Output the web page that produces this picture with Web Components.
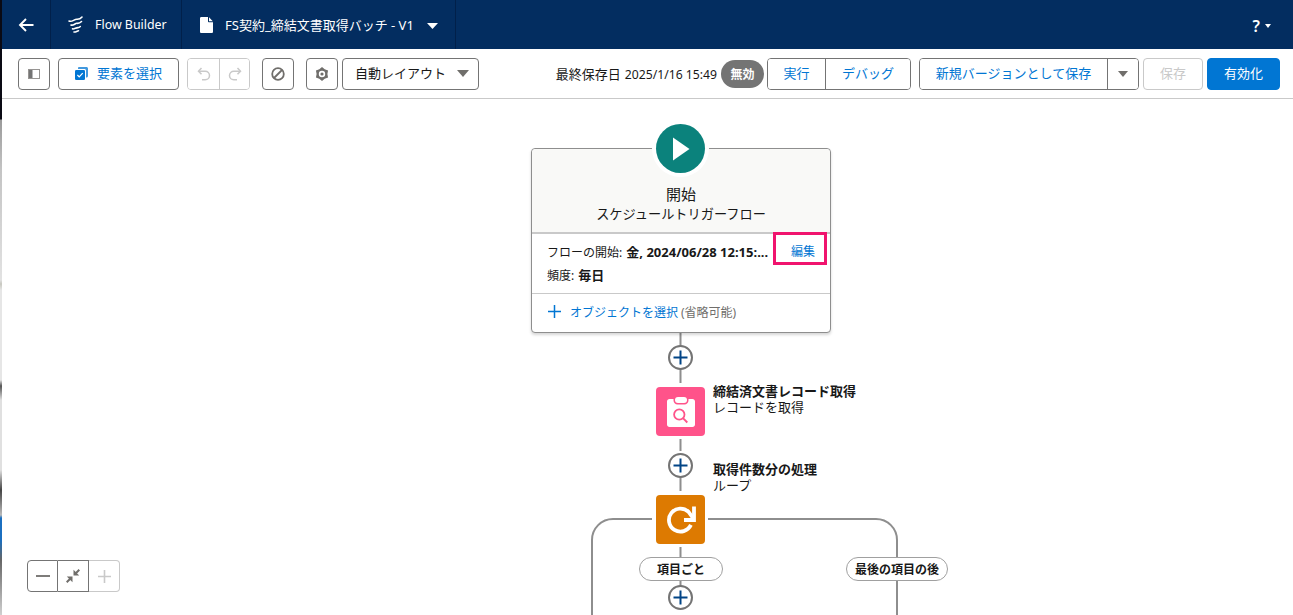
<!DOCTYPE html>
<html lang="ja"><head><meta charset="utf-8"><title>Flow Builder</title>
<style>
html,body{margin:0;height:615px;overflow:hidden;background:#fff;font-family:"Noto Sans","Noto Sans CJK JP",sans-serif;font-size:13px;color:#181818}
</style></head><body>
<fb-app>
  <fb-header slot="header"></fb-header>
  <fb-toolbar slot="toolbar"></fb-toolbar>
  <fb-canvas slot="canvas"></fb-canvas>
</fb-app>
<script>
const def=(name,html)=>{customElements.define(name,class extends HTMLElement{
  constructor(){super();this.attachShadow({mode:'open'}).innerHTML=html;}
});};

def('fb-app',`<style>
:host{display:flex;width:1293px;height:615px;overflow:hidden}
.strip{width:2px;flex:none;background:linear-gradient(#0a0a14 0,#0a0a14 119px,#9a9a9a 120px,#c4c4c4 170px,#e2e2e2 280px,#c8c8c0 284px,#e6e6e6 290px,#e6e6e6 380px,#555 386px,#e0e0e0 400px,#e0e0e0 470px,#444 490px,#bbb 515px,#1b6fc0 518px,#1b6fc0 540px,#666 560px,#d0d0d0 615px)}
.main{flex:1;display:flex;flex-direction:column;min-width:0}
</style><div class="strip"></div><div class="main"><slot name="header"></slot><slot name="toolbar"></slot><slot name="canvas"></slot></div>`);

def('fb-hsec',`<style>
:host{display:flex;align-items:center;height:49px;border-right:1px solid #01204a;box-sizing:border-box;color:#fff;font-size:13px;white-space:nowrap}
</style><slot></slot>`);

def('fb-header',`<style>
:host{display:flex;align-items:center;height:49px;background:#032d60;flex:none}
svg{display:block;flex:none}
.help{margin-left:auto;display:flex;align-items:center;gap:5px;margin-right:22px;color:#fff;font-size:16px;font-weight:600;padding-top:2px}
.tri{margin:2px 0 0 13px}
</style>
<fb-hsec style="width:49px;justify-content:center">
  <svg width="16" height="14" viewBox="0 0 16 14"><path d="M15.500 7H2M8 1 2 7l6 6" fill="none" stroke="#fff" stroke-width="1.900"/></svg>
</fb-hsec>
<fb-hsec style="width:131px;padding-left:17px">
  <svg width="15" height="17" viewBox="0 0 15 17" style="margin-right:12px"><g fill="none" stroke="#fff" stroke-width="1.600" stroke-linecap="round"><path d="M1 5C4 6.500 6 3.200 9 3.300 11 3.400 13 2.200 14 1"/><path d="M3 9C5.500 10 7 7.200 9 7.300 11 7.500 12.500 6.500 13.500 5.500"/><path d="M4.500 12.800C6 13.500 8 11.600 10 11.600 11 11.600 11.800 11 12.300 10.500"/><path d="M6 16C7.500 16.300 9 15 10.500 14.800"/></g></svg>
  <span style="font-size:12.4px">Flow Builder</span>
</fb-hsec>
<fb-hsec style="width:274px;padding-left:18px">
  <svg width="13" height="16" viewBox="0 0 13 16" style="margin-right:12px"><path d="M1.300 0H8v4.200c0 .6.500 1 1 1h4v9.500c0 .7-.6 1.300-1.300 1.300H1.300C.6 16 0 15.400 0 14.700V1.300C0 .6.600 0 1.300 0ZM9 .3l3.800 3.900H9Z" fill="#fff"/></svg>
  <span>FS契約_締結文書取得バッチ - V1</span>
  <svg class="tri" width="11" height="6" viewBox="0 0 11 6"><path d="M0 0h11L5.500 6Z" fill="#fff"/></svg>
</fb-hsec>
<div class="help"><span>?</span><svg width="6" height="4" viewBox="0 0 6 4"><path d="M0 0h6L3 4Z" fill="#fff"/></svg></div>`);

def('fb-btn',`<style>
:host{display:inline-flex;align-items:center;justify-content:center;box-sizing:border-box;height:32px;padding-bottom:2px;border:1px solid #747474;border-radius:4px;background:#fff;color:#0176d3;font-size:13px;white-space:nowrap;flex:none}
:host([variant=neutral]){color:#181818}
:host([variant=disabled]){border-color:#c9c9c9;color:#c9c9c9}
:host([variant=brand]){background:#0176d3;border-color:#0176d3;color:#fff}
:host([seg]){border:0;border-radius:0;height:100%}
:host([seg][div]){border-left:1px solid #747474}
:host([seg][variant=disabled][div]){border-left-color:#c9c9c9}
::slotted(svg){margin-top:2px}
</style><slot></slot>`);

def('fb-group',`<style>
:host{display:flex;box-sizing:border-box;height:32px;border:1px solid #747474;border-radius:4px;overflow:hidden;background:#fff;flex:none}
:host([variant=disabled]){border-color:#c9c9c9}
</style><slot></slot>`);

def('fb-toolbar',`<style>
:host{display:flex;align-items:center;height:50px;box-sizing:border-box;border-bottom:1px solid #c9c9c9;padding:0 13px 0 16px;background:#fff;flex:none}
svg{display:block}
.saved{font-size:13px;margin-left:auto;margin-right:4px;white-space:nowrap;color:#181818;display:flex;align-items:baseline}
.saved i{font-style:normal;font-size:12.2px;margin-left:4px}
.badge{display:flex;align-items:center;justify-content:center;width:43px;height:28px;border-radius:14px;background:#747474;color:#fff;font-size:12px;font-weight:700;margin-right:3px;flex:none}
</style>
<fb-btn style="width:32px;margin-right:8px"><svg width="12" height="10" viewBox="0 0 12 10"><rect x=".5" y=".5" width="11" height="9" fill="#fff" stroke="#969492"/><rect x="1" y="1" width="3.500" height="8" fill="#747474"/></svg></fb-btn>
<fb-btn style="width:121px;margin-right:8px"><svg width="13" height="13" viewBox="0 0 13 13" style="margin-right:9px"><path d="M4 0h7.500C12.300 0 13 .7 13 1.500V9c0 .8-.7 1.500-1.500 1.500H11V3.500C11 2.700 10.300 2 9.500 2H3v-.5C3 .7 3.200 0 4 0Z" fill="#0176d3" opacity=".75"/><rect x="0" y="3" width="10" height="10" rx="1.300" fill="#0176d3"/><path d="m2.400 8 1.800 1.800 3.500-3.700" fill="none" stroke="#fff" stroke-width="1.200"/></svg>要素を選択</fb-btn>
<fb-group variant="disabled" style="width:63px;margin-right:12px">
  <fb-btn seg variant="disabled" style="width:31px"><svg width="14" height="14" viewBox="0 0 14 14" fill="none" stroke="#c9c9c9" stroke-width="1.500"><path d="M4.500 1 1.500 4.200l3 3.100"/><path d="M2 4.200h6.200a4.300 4.300 0 0 1 0 8.600H5"/></svg></fb-btn>
  <fb-btn seg div variant="disabled" style="width:30px"><svg width="14" height="14" viewBox="0 0 14 14" fill="none" stroke="#c9c9c9" stroke-width="1.500"><path d="m9.500 1 3 3.200-3 3.100"/><path d="M12 4.200H5.800a4.300 4.300 0 0 0 0 8.600H9"/></svg></fb-btn>
</fb-group>
<fb-btn style="width:32px;margin-right:12px"><svg width="14" height="14" viewBox="0 0 14 14" fill="none" stroke="#706e6b" stroke-width="1.800"><circle cx="7" cy="7" r="5.800"/><path d="M3 11 11 3"/></svg></fb-btn>
<fb-btn style="width:32px;margin-right:4px"><svg width="14" height="14" viewBox="0 0 14 14"><path fill="#706e6b" fill-rule="evenodd" d="M7 0 9.700 2.320 13.060 3.500 12.400 7 13.060 10.500 9.700 11.680 7 14 4.300 11.680 .94 10.500 1.600 7 .94 3.500 4.300 2.320ZM7 3.800a3.200 3.200 0 1 0 0 6.400 3.200 3.200 0 0 0 0-6.400Z"/><circle cx="7" cy="7" r="1.600" fill="#706e6b"/></svg></fb-btn>
<fb-btn variant="neutral" style="width:137px;justify-content:space-between;padding-left:12px;padding-right:9px">自動レイアウト<svg width="12" height="7" viewBox="0 0 12 7"><path d="M0 0h12L6 7Z" fill="#706e6b"/></svg></fb-btn>
<span class="saved">最終保存日<i>2025/1/16 15:49</i></span>
<span class="badge">無効</span>
<fb-group style="width:144px;margin-right:8px">
  <fb-btn seg style="width:57px">実行</fb-btn>
  <fb-btn seg div style="width:85px">デバッグ</fb-btn>
</fb-group>
<fb-group style="width:220px;margin-right:4px">
  <fb-btn seg style="width:187px">新規バージョンとして保存</fb-btn>
  <fb-btn seg div style="width:31px"><svg width="10" height="6" viewBox="0 0 10 6"><path d="M0 0h10L5 6Z" fill="#706e6b"/></svg></fb-btn>
</fb-group>
<fb-btn variant="disabled" style="width:60px;margin-right:4px">保存</fb-btn>
<fb-btn variant="brand" style="width:73px">有効化</fb-btn>`);

def('fb-start-card',`<style>
:host{position:absolute;left:529px;top:49px;width:300px;height:185px;box-sizing:border-box;border:1px solid #8e8e8e;border-radius:4px;background:#fff;box-shadow:0 2px 3px rgba(0,0,0,.16);display:flex;flex-direction:column;font-size:12px}
.head{height:85px;box-sizing:border-box;background:#f9f9f7;border-radius:4px 4px 0 0;border-bottom:2px solid #c9c9c9;text-align:center;padding-top:35px;flex:none}
.t1{font-size:15px;line-height:21px}
.t2{font-size:13.2px;line-height:19px;white-space:nowrap}
.body{height:60px;box-sizing:border-box;padding:6px 15px 0;border-bottom:1px solid #c9c9c9;position:relative;flex:none}
.row{height:24px;line-height:24px;white-space:nowrap}
.row+.row{margin-top:-1px}
.row b{font-weight:700;font-size:13px;margin-left:1px}
.edit{position:absolute;right:3px;top:-2px;width:54px;height:33px;box-sizing:border-box;border:3px solid #f0146e;color:#0176d3;font-size:12px;display:flex;align-items:center;justify-content:flex-end;padding:4px 9px 0 0}
.foot{flex:1;display:flex;align-items:center;padding:0 0 3px 16px;color:#0176d3}
.foot svg{margin-right:9px}
.foot span{color:#706e6b;margin-left:3px}
</style>
<div class="head"><div class="t1">開始</div><div class="t2">スケジュールトリガーフロー</div></div>
<div class="body"><div class="row">フローの開始: <b>金, 2024/06/28 12:15:...</b></div><div class="row">頻度: <b>毎日</b></div><div class="edit">編集</div></div>
<div class="foot"><svg width="13" height="13" viewBox="0 0 13 13"><path d="M6.500 0v13M0 6.500h13" stroke="#0176d3" stroke-width="1.500"/></svg>オブジェクトを選択<span>(省略可能)</span></div>`);

def('fb-add',`<style>
:host{position:absolute;width:25px;height:25px;box-sizing:border-box;border:2px solid #747474;border-radius:50%;background:#fff;display:flex;align-items:center;justify-content:center}
svg{display:block}
</style><svg width="15" height="15" viewBox="0 0 15 15"><path d="M7.500 .5v14M.5 7.500h14" stroke="#014486" stroke-width="2"/></svg>`);

def('fb-pill',`<style>
:host{position:absolute;height:24px;box-sizing:border-box;border:1px solid #a0a0a0;border-radius:12px;background:#fff;display:flex;align-items:center;justify-content:center;font-size:12px;font-weight:700;white-space:nowrap}
</style><slot></slot>`);

def('fb-node-label',`<style>
:host{position:absolute;font-size:13px;line-height:16px;white-space:nowrap}
b{display:block;font-weight:700}
span{display:block}
</style><b><slot name="title"></slot></b><span><slot name="sub"></slot></span>`);

def('fb-zoom',`<style>
:host{position:absolute;left:25px;top:461px;display:flex;width:93px;height:32px;background:#fff}
div{width:31px;display:flex;align-items:center;justify-content:center;box-sizing:border-box;border:1px solid #747474;border-left:0}
.m{border-left:1px solid #747474;border-radius:4px 0 0 4px}
.p{border-color:#c9c9c9;border-radius:0 4px 4px 0}
svg{display:block}
</style>
<div class="m"><svg width="14" height="2" viewBox="0 0 14 2"><path d="M0 1h14" stroke="#706e6b" stroke-width="1.800"/></svg></div>
<div><svg width="14" height="14" viewBox="0 0 14 14"><g fill="#706e6b"><path d="M7.500 .8V6.500H13.200Z"/><path d="M6.500 13.200V7.500H.8Z"/></g><path d="M9.800 4.200 13.300.7M4.200 9.800.7 13.300" stroke="#706e6b" stroke-width="2"/></svg></div>
<div class="p"><svg width="13" height="13" viewBox="0 0 13 13"><path d="M6.500 0v13M0 6.500h13" stroke="#c9c9c9" stroke-width="1.600"/></svg></div>`);

def('fb-canvas',`<style>
:host{display:block;position:relative;flex:1;min-height:0;overflow:hidden;background:#fff}
.lines{position:absolute;left:0;top:0}
.play,.tile{position:absolute;display:flex;align-items:center;justify-content:center}
.play{left:654px;top:25px;width:49px;height:49px;border-radius:50%;background:#0b827c;box-shadow:0 0 0 4px #fff;z-index:1}
.tile{left:654px;width:49px;height:49px;border-radius:4px}
svg{display:block}
</style>
<svg class="lines" width="1291" height="516" viewBox="0 0 1291 516" fill="none" stroke="#8e8e8e" stroke-width="2">
  <path d="M678.500 234V284M678.500 340V352M678.500 378V392M678.500 448V460M678.500 480V492"/>
  <path d="M650 420H611a21 21 0 0 0-21 21V516"/>
  <path d="M706 420H874a21 21 0 0 1 21 21V516"/>
</svg>
<div class="play"><svg width="18" height="24" viewBox="0 0 18 24"><path d="M1 .5v23L17.500 12Z" fill="#fff"/></svg></div>
<fb-start-card></fb-start-card>
<fb-add style="left:666px;top:246px"></fb-add>
<div class="tile" style="top:288px;background:#ff538a"><svg width="28" height="30" viewBox="0 0 28 30"><path fill="#fff" d="M2.500 2H6.500v1.500c0 2.200 1.800 4 4 4h7c2.200 0 4-1.800 4-4V2h4C26.900 2 28 3.100 28 4.500v23c0 1.400-1.100 2.500-2.500 2.500h-23C1.100 30 0 28.900 0 27.500v-23C0 3.100 1.100 2 2.500 2Z"/><rect x="8" y="0" width="12" height="6" rx="3" fill="#fff"/><circle cx="12.300" cy="17.500" r="5.200" fill="none" stroke="#ff538a" stroke-width="1.800"/><path d="m16 21.200 4.300 4.300" stroke="#ff538a" stroke-width="1.900"/></svg></div>
<fb-node-label style="left:711px;top:284px"><span slot="title">締結済文書レコード取得</span><span slot="sub">レコードを取得</span></fb-node-label>
<fb-add style="left:666px;top:354px"></fb-add>
<fb-node-label style="left:711px;top:362px"><span slot="title">取得件数分の処理</span><span slot="sub">ループ</span></fb-node-label>
<div class="tile" style="top:396px;background:#dd7a01"><svg width="30" height="30" viewBox="0 0 30 30" fill="none" stroke="#fff" stroke-width="3.800"><path d="M24.900 19.900A11.500 11.500 0 1 1 22.600 6.900L27 13"/><path d="M28 1.500V15H18"/></svg></div>
<fb-pill style="left:637px;top:458px;width:84px">項目ごと</fb-pill>
<fb-pill style="left:844px;top:458px;width:102px">最後の項目の後</fb-pill>
<fb-add style="left:666px;top:486px"></fb-add>
<fb-zoom></fb-zoom>`);
</script>
</body></html>
